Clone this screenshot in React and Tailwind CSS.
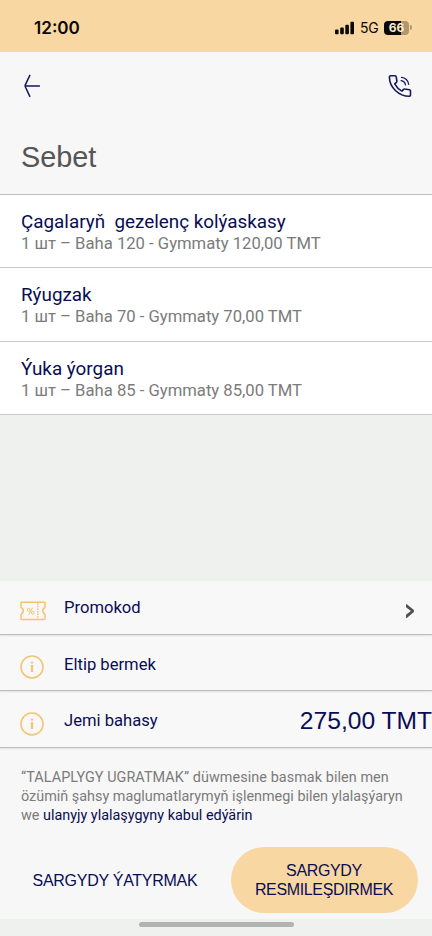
import React from 'react';

const items = [
  { id: 1, name: 'Çagalaryň\u00a0 gezelenç kolýaskasy', details: '1 шт – Baha 120 - Gymmaty 120,00 TMT' },
  { id: 2, name: 'Rýugzak', details: '1 шт – Baha 70 - Gymmaty 70,00 TMT' },
  { id: 3, name: 'Ýuka ýorgan', details: '1 шт – Baha 85 - Gymmaty 85,00 TMT' },
];

const SignalIcon = () => (
  <svg width="20" height="14" viewBox="0 0 20 14" fill="#0b0906">
    <rect x="0" y="8.6" width="3.6" height="4.7" rx="1" />
    <rect x="5.2" y="6.4" width="3.6" height="6.9" rx="1" />
    <rect x="10.3" y="3.7" width="3.6" height="9.6" rx="1" />
    <rect x="15.4" y="0.8" width="3.6" height="12.5" rx="1" />
  </svg>
);

const Battery = () => (
  <div className="flex items-center">
    <div className="flex h-[14px] w-[25px] items-center justify-center rounded-[4px] bg-linear-to-r from-[#0b0906] from-68% to-[#b0976f] to-68%">
      <span className="font-['Inter'] text-[12px] leading-[14px] font-bold text-[#fdeccf]">66</span>
    </div>
    <div className="ml-px h-[5px] w-[1.5px] rounded-r-full bg-[#b0976f]" />
  </div>
);

const BackIcon = () => (
  <svg width="16" height="24" viewBox="0 0 16 24" fill="none" stroke="#16195c" strokeWidth="1.5" strokeLinecap="round" strokeLinejoin="round">
    <path d="M5.8 1.4 1.3 10.9Q.9 11.8 1.3 12.7L5.8 22.4M1.2 11.9h14.2" />
  </svg>
);

const PhoneIcon = () => (
  <svg width="24" height="24" viewBox="0 0 24 24" fill="none" stroke="#16195c" strokeWidth="1.6" strokeLinecap="round" strokeLinejoin="round">
    <path d="M2.6 1.8H7a1.2 1.2 0 0 1 1.2 1L8.9 7q.1.8-.5 1.3L6.7 9.9q2.6 4.8 7.2 7.2l1.6-1.7q.5-.6 1.3-.4l4.6.8q1.1.2 1.1 1.3v4q0 1.2-1.2 1.2C10.8 22.3 1.4 13.2 1.4 3Q1.4 1.8 2.6 1.8Z" />
    <path d="M13.5 3.3c3.7.3 6.8 3.3 7.2 7M13.1 6.7c2.3.3 4 2 4.4 4.2" strokeWidth="1.3" />
  </svg>
);

const TicketIcon = () => (
  <svg width="26" height="20" viewBox="0 0 26 20" fill="none" stroke="#f3c471" strokeWidth="1.5" strokeLinejoin="round">
    <path d="M1.7 1.2h22.6q.7 0 .7.7v4.6a3.5 3.5 0 0 0 0 6.6v4.7q0 .7-.7.7H1.7q-.7 0-.7-.7v-4.7a3.5 3.5 0 0 0 0-6.6V1.9q0-.7.7-.7Z" />
    <path d="M17.8 2.2v16" strokeDasharray="1.5 1.1" />
    <path d="m8.8 13.8 3.7-7.1" strokeWidth="1" />
    <circle cx="8.6" cy="8.8" r="1.4" strokeWidth="1" />
    <circle cx="12.8" cy="11.7" r="1.4" strokeWidth="1" />
  </svg>
);

const InfoIcon = () => (
  <svg width="24" height="24" viewBox="0 0 24 24" fill="none" stroke="#f3c471">
    <circle cx="12" cy="12" r="11" strokeWidth="1.6" />
    <path d="M12 10v7" strokeWidth="2.2" />
    <circle cx="12" cy="7.6" r="1.2" fill="#f3c471" stroke="none" />
  </svg>
);

const SummaryRow = ({ icon, label, children }) => (
  <div className="flex h-[56.5px] items-center border-b border-[#bcbdbd] pt-[5px] pl-5 shadow-[0_1px_2px_#00000018]">
    <div className="w-[44px] pt-[4px]">{icon}</div>
    <span className="flex-1 text-[16.6px]">{label}</span>
    {children}
  </div>
);

const App = () => {
  return (
    <div className="flex h-[936px] w-[432px] flex-col overflow-hidden bg-[#f7f7f7] font-['Roboto',sans-serif] text-[#090d54]">
      {/* Status bar */}
      <div className="flex h-[52px] items-center justify-between bg-[#f8d7a3] pt-[3px] pr-[20.5px] pl-[34px] text-[#0b0906]">
        <span className="font-['Inter'] text-[17.1px] font-semibold">12:00</span>
        <div className="flex items-center">
          <SignalIcon />
          <span className="ml-[5px] w-[24px] font-['Inter'] text-[14px] tracking-[-0.2px]">5G</span>
          <Battery />
        </div>
      </div>

      {/* Header */}
      <header className="h-[143px] border-b border-[#bdbfbf] pt-[22px] pl-[21px]">
        <div className="flex items-center justify-between pr-[20px] pl-[3px]">
          <button type="button"><BackIcon /></button>
          <button type="button"><PhoneIcon /></button>
        </div>
        <h1 className="mt-[41px] font-['Liberation_Sans'] text-[28.8px] leading-[36px] text-[#555555]">Sebet</h1>
      </header>

      {/* Cart items */}
      <div>
        {items.map((item) => (
          <div key={item.id} className="h-[73.3px] border-b border-[#c8c9c9] bg-white pt-[15px] pl-[21px]">
            <p className="text-[18.85px] leading-[24px]">{item.name}</p>
            <p className="text-[16.65px] leading-[20px] text-[#7b7b7b]">{item.details}</p>
          </div>
        ))}
      </div>
      <div className="h-[166px] shrink-0 bg-[#eff1ef]" />

      {/* Totals */}
      <div className="h-[167px] shrink-0 bg-[#f8f8f8]">
        <div className="-mt-[2.5px]">
          <SummaryRow icon={<TicketIcon />} label="Promokod">
            <svg className="mt-[5px] mr-[17px]" width="10" height="16" viewBox="0 0 10 16" fill="#505152">
              <path d="M1 1.2h.8L8.9 7v2L1.8 15H1v-3.2L5.9 8 1 4.3Z" />
            </svg>
          </SummaryRow>
          <SummaryRow icon={<InfoIcon />} label="Eltip bermek" />
          <SummaryRow icon={<InfoIcon />} label="Jemi bahasy">
            <span className="font-['Liberation_Sans'] text-[24.6px] whitespace-nowrap">275,00 TMT</span>
          </SummaryRow>
        </div>
      </div>

      <p className="mt-[20px] pl-[21px] text-[14.4px] leading-[19px] whitespace-nowrap text-[#7b7b7b]">
        <span className="tracking-[0.07px]">“TALAPLYGY UGRATMAK” düwmesine basmak bilen men</span>
        <br />
        özümiň şahsy maglumatlarymyň işlenmegi bilen ylalaşýaryn
        <br />
        we <a className="text-[#090d54]">ulanyjy ylalaşygyny kabul edýärin</a>
      </p>

      {/* Actions */}
      <div className="mt-[22px] flex items-center pl-[32.5px] font-['Liberation_Sans'] text-[16px] leading-[19px] tracking-[-0.27px]">
        <button type="button" className="w-[198px] pt-px text-left">SARGYDY ÝATYRMAK</button>
        <button type="button" className="h-[66px] w-[187px] rounded-full bg-[#f8d7a3] pt-px text-center tracking-[-0.35px]">
          SARGYDY
          <br />
          RESMILEŞDIRMEK
        </button>
      </div>
      <div className="mt-auto h-[17px] shrink-0 bg-[#eff1ef] pt-[3px]">
        <div className="ml-[139px] h-[5px] w-[155px] rounded-full bg-[#b1b2b2]" />
      </div>
    </div>
  );
};

export default App;
